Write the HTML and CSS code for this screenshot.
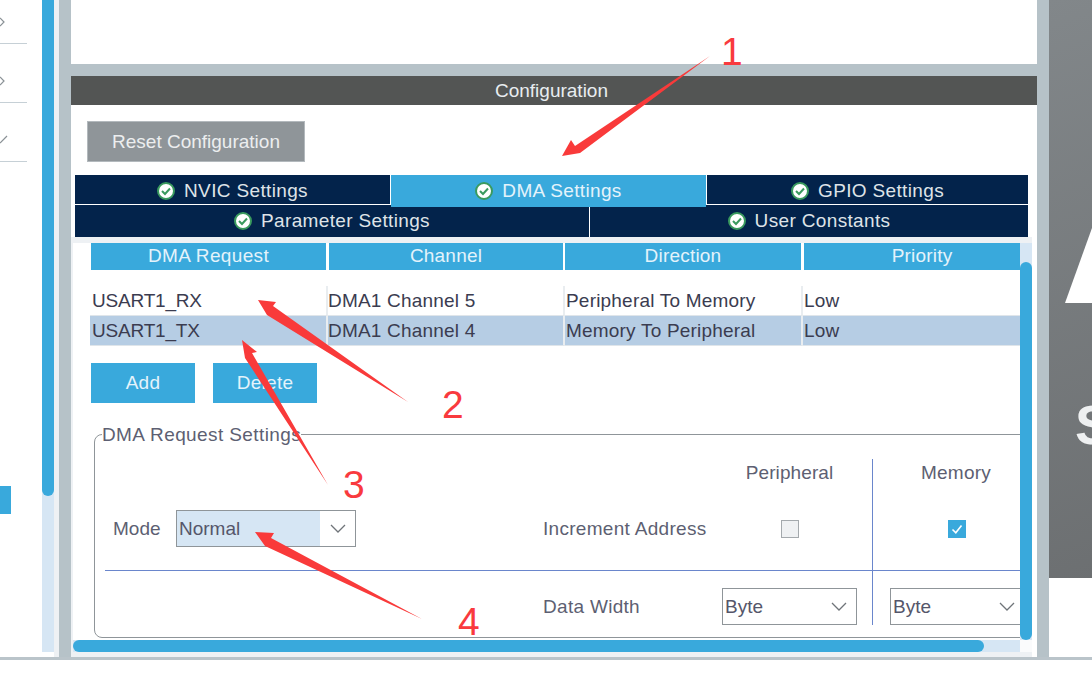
FILE: index.html
```html
<!DOCTYPE html>
<html lang="en">
<head>
    <meta charset="UTF-8">
    <title>Configuration</title>
    <link rel="stylesheet" href="styles.css">
</head>
<body>
    <div class="app">
        <div class="sidebar">
            <div class="side-row first"><svg width="5" height="10" viewBox="0 0 5 10"><path d="M0 1 L4 5 L0 9" fill="none" stroke="#8a9196" stroke-width="1.2"/></svg></div>
            <div class="side-row"><svg width="5" height="10" viewBox="0 0 5 10"><path d="M0 1 L4 5 L0 9" fill="none" stroke="#8a9196" stroke-width="1.2"/></svg></div>
            <div class="side-row"><svg width="8" height="10" viewBox="0 0 8 10"><path d="M0 8 L7 1" fill="none" stroke="#8a9196" stroke-width="1.2"/></svg></div>
            <div class="side-selected"></div>
        </div>
        <div class="side-scroll"><div class="side-thumb"></div></div>
        <div class="side-gap"></div>
        <div class="divider"></div>

        <div class="main">
            <div class="top-panel"></div>
            <div class="config-title">Configuration</div>
            <div class="config-body">
                <button class="btn-reset">Reset Configuration</button>
                <div class="tabs">
                    <div class="tab-row">
                        <div class="tab tab-nvic"><svg class="ok"><use href="#ok-icon"/></svg>NVIC Settings</div>
                        <div class="tab tab-dma active"><svg class="ok"><use href="#ok-icon"/></svg>DMA Settings</div>
                        <div class="tab tab-gpio"><svg class="ok"><use href="#ok-icon"/></svg>GPIO Settings</div>
                    </div>
                    <div class="tab-row second">
                        <div class="tab tab-param"><svg class="ok"><use href="#ok-icon"/></svg>Parameter Settings</div>
                        <div class="tab tab-user"><svg class="ok"><use href="#ok-icon"/></svg>User Constants</div>
                    </div>
                </div>

                <div class="pane">
                    <div class="pane-content">
                        <table class="dma-table">
                            <colgroup>
                                <col class="c1"><col class="c2"><col class="c3"><col class="c4">
                            </colgroup>
                            <thead>
                                <tr>
                                    <th>DMA Request</th>
                                    <th class="th-channel">Channel</th>
                                    <th>Direction</th>
                                    <th>Priority</th>
                                </tr>
                            </thead>
                            <tbody>
                                <tr class="spacer"><td colspan="4"></td></tr>
                                <tr>
                                    <td>USART1_RX</td>
                                    <td>DMA1 Channel 5</td>
                                    <td>Peripheral To Memory</td>
                                    <td>Low</td>
                                </tr>
                                <tr class="selected">
                                    <td>USART1_TX</td>
                                    <td>DMA1 Channel 4</td>
                                    <td>Memory To Peripheral</td>
                                    <td>Low</td>
                                </tr>
                            </tbody>
                        </table>

                        <div class="actions">
                            <button class="btn">Add</button>
                            <button class="btn">Delete</button>
                        </div>

                        <fieldset class="settings">
                            <legend>DMA Request Settings</legend>
                            <div class="settings-grid">
                                <div></div>
                                <div></div>
                                <div class="col-head">Peripheral</div>
                                <div class="col-head col-mem">Memory</div>

                                <div class="mode-cell">
                                    <span class="mode-label">Mode</span>
                                    <div class="select select-mode">
                                        <span class="select-value">Normal</span>
                                        <span class="select-arrow"><svg width="16" height="9" viewBox="0 0 16 9"><path d="M1 1 L8 8 L15 1" fill="none" stroke="#6f7479" stroke-width="1.3"/></svg></span>
                                    </div>
                                </div>
                                <div class="label-cell">Increment Address</div>
                                <div class="check-cell"><span class="check"></span></div>
                                <div class="check-cell col-mem">
                                    <span class="check on"><svg width="18" height="18" viewBox="0 0 18 18"><path d="M4.5 9.5 L7.8 12.8 L13.5 5.5" fill="none" stroke="#fff" stroke-width="1.6"/></svg></span>
                                </div>

                                <div class="row-end"></div>
                                <div class="row-end label-cell">Data Width</div>
                                <div class="row-end select-cell">
                                    <div class="select">
                                        <span class="select-value">Byte</span>
                                        <span class="select-arrow"><svg width="16" height="9" viewBox="0 0 16 9"><path d="M1 1 L8 8 L15 1" fill="none" stroke="#6f7479" stroke-width="1.3"/></svg></span>
                                    </div>
                                </div>
                                <div class="row-end select-cell col-mem">
                                    <div class="select">
                                        <span class="select-value">Byte</span>
                                        <span class="select-arrow"><svg width="16" height="9" viewBox="0 0 16 9"><path d="M1 1 L8 8 L15 1" fill="none" stroke="#6f7479" stroke-width="1.3"/></svg></span>
                                    </div>
                                </div>
                            </div>
                        </fieldset>
                    </div>
                    <div class="v-scroll"><div class="v-thumb"></div></div>
                    <div class="h-scroll"><div class="h-thumb"></div></div>
                    <div class="scroll-corner"></div>
                </div>
            </div>
        </div>

        <div class="divider"></div>
        <div class="logo-side">
            <div class="logo-panel">
                <svg class="logo-shape" width="27" height="75" viewBox="0 0 27 75"><polygon points="27,0 27,75 0,75" fill="#fff"/></svg>
                <span class="logo-letter">S</span>
            </div>
        </div>
    </div>

    <!-- red notes drawn on top of the screenshot -->
    <svg class="notes" width="1092" height="673" viewBox="0 0 1092 673">
        <defs>
            <symbol id="ok-icon" viewBox="0 0 18 18">
                <circle cx="9" cy="9" r="8" fill="#fff" stroke="#3a9a5e" stroke-width="2"/>
                <path d="M5 9 L8 12 L13 6.5" fill="none" stroke="#3a9a5e" stroke-width="2"/>
            </symbol>
        </defs>
        <g fill="#f93a3a">
            <polygon points="710,56 580,153 562,156 571,140 575,146"/>
            <polygon points="408,402 267,315 258,300 276,302 273,306"/>
            <polygon points="328,485 245,358 242,340 257,352 252,353"/>
            <polygon points="422,619 265,546 255,532 274,533 271,538"/>
        </g>
        <g class="note-num">
            <text x="721" y="65">1</text>
            <text x="442" y="418">2</text>
            <text x="343" y="498">3</text>
            <text x="458" y="635">4</text>
        </g>
    </svg>
</body>
</html>
```

FILE: styles.css
```css
html, body {
    margin: 0;
    height: 673px;
    overflow: hidden;
    background: #fff;
}

body {
    position: relative;
    font-family: 'Liberation Sans', Arial, sans-serif;
    font-size: 19px;
}

.app {
    display: flex;
    height: 657px;
    border-bottom: 3px solid #bac4ca;
}

/* left column */
.sidebar {
    width: 42px;
    flex: none;
    display: flex;
    flex-direction: column;
}

.side-row {
    width: 27px;
    height: 58px;
    box-sizing: content-box;
    border-bottom: 1px solid #c6d0d6;
    display: flex;
    align-items: flex-end;
    overflow: hidden;
}

.side-row svg {
    margin-bottom: 16px;
}

.side-row.first {
    height: 43px;
}

.side-selected {
    width: 11px;
    height: 28px;
    margin-top: 324px;
    background: #39a9dc;
}

.side-scroll {
    width: 12px;
    height: 652px;
    flex: none;
    background: #d6e6f4;
}

.side-thumb {
    height: 496px;
    background: #39a9dc;
    border-radius: 0 0 6px 6px;
}

.side-gap {
    width: 5px;
    flex: none;
    background: #eef1f4;
}

.divider {
    width: 12px;
    flex: none;
    background: #b6c2c8;
}

/* middle column */
.main {
    width: 966px;
    flex: none;
    display: flex;
    flex-direction: column;
}

.top-panel {
    height: 64px;
    background: #fff;
    border-bottom: 12px solid #b6c2c8;
}

.config-title {
    height: 29px;
    line-height: 29px;
    padding-right: 5px;
    text-align: center;
    background: #535554;
    color: #e8edf0;
}

.config-body {
    flex: 1;
    display: flex;
    flex-direction: column;
    background: #fff;
}

.btn-reset {
    width: 218px;
    height: 41px;
    margin: 16px 0 0 16px;
    padding: 0;
    border: 1px solid #b3b9bd;
    background: #8f9599;
    color: #eceeef;
    font: inherit;
}

/* tabs */
.tabs {
    margin: 13px 0 0 4px;
    width: 953px;
}

.tab-row {
    display: flex;
    height: 30px;
}

.tab-row.second {
    height: 32px;
}

.tab {
    box-sizing: border-box;
    background: #03234b;
    color: #dfe3e8;
    display: flex;
    align-items: center;
    justify-content: center;
    gap: 9px;
    letter-spacing: 0.35px;
    height: 29px;
    padding-top: 3px;
}

.tab-row.second .tab {
    height: 32px;
    padding-top: 0;
}

.tab-nvic { width: 315px; margin-right: 1px; }
.tab-dma { width: 315px; margin-right: 1px; }
.tab-gpio { width: 321px; }
.tab-param { width: 514px; margin-right: 1px; }
.tab-user { width: 438px; }

.tab.active {
    background: #39a9dc;
    color: #e4f3fb;
    height: 32px;
    padding-top: 0;
    position: relative;
}

.ok {
    width: 18px;
    height: 18px;
    flex: none;
}

/* scrolling pane */
.pane {
    flex: 1;
    display: grid;
    grid-template-columns: 947px 12px;
    grid-template-rows: 397px 12px;
    padding: 6px 0 5px 2px;
    background: #eef1f4;
    border-right: 5px solid #fff;
}

.pane-content {
    background: #fff;
    overflow: hidden;
    padding-left: 17px;
}

.v-scroll {
    background: #d6e6f4;
    padding-top: 19px;
}

.v-thumb {
    height: 378px;
    background: #39a9dc;
    border-radius: 6px;
}

.h-scroll {
    background: #d6e6f4;
}

.h-thumb {
    width: 911px;
    height: 12px;
    background: #39a9dc;
    border-radius: 6px;
}

.scroll-corner {
    background: #fafbfc;
}

/* table */
.dma-table {
    width: 930px;
    table-layout: fixed;
    border-collapse: separate;
    border-spacing: 0;
    color: #3b3c50;
}

.c1 { width: 238px; }
.c2 { width: 237px; }
.c3 { width: 238px; }
.c4 { width: 217px; }

.dma-table th {
    box-sizing: border-box;
    height: 27px;
    padding: 0 0 2px;
    font-weight: normal;
    background: #39a9dc;
    color: #e4f3fb;
    border-right: 2px solid #fff;
    letter-spacing: 0.2px;
}

.dma-table th:first-child {
    border-left: 1px solid #fff;
    letter-spacing: 0.35px;
}

.dma-table .th-channel {
    border-left: 1px solid #fff;
}

.dma-table th:last-child {
    border-left: 1px solid #fff;
    border-right: 0;
    padding-left: 20px;
}

.dma-table td {
    height: 28px;
    padding: 1px 0 0 1px;
    border-right: 2px solid #e9edf0;
    border-bottom: 1px solid #dfe5ea;
    white-space: nowrap;
    letter-spacing: 0.2px;
}

.dma-table td:first-child {
    padding-left: 2px;
    letter-spacing: -0.2px;
}

.dma-table td:nth-child(2) {
    padding-left: 0;
}

.dma-table td:last-child {
    border-right: 0;
}

.dma-table .spacer td {
    height: 16px;
    border: 0;
    padding: 0;
}

.selected td {
    background: #b6cde4;
}

/* add / delete */
.actions {
    display: flex;
    gap: 18px;
    margin: 17px 0 0 1px;
}

.btn {
    width: 104px;
    height: 40px;
    padding: 0;
    border: 0;
    background: #39a9dc;
    color: #e4f3fb;
    font: inherit;
    letter-spacing: 0.3px;
}

/* settings group */
.settings {
    width: 1000px;
    box-sizing: border-box;
    margin: 21px 0 0 4px;
    padding: 14px 0 12px 10px;
    border: 1px solid #8f9599;
    border-radius: 8px;
    color: #5d5f72;
}

.settings legend {
    margin-left: -3px;
    padding: 0;
    line-height: 21px;
    letter-spacing: 0.4px;
}

.settings-grid {
    display: grid;
    grid-template-columns: 438px 179px 150px 167px;
    grid-template-rows: 28px 83px 55px;
}

.col-head {
    text-align: center;
    padding-right: 15px;
    line-height: 28px;
    letter-spacing: 0.1px;
}

.col-mem {
    border-left: 1px solid #6a86cc;
    padding-right: 0;
    letter-spacing: 0.2px;
}

.mode-cell {
    display: flex;
    align-items: center;
    padding-left: 8px;
}

.mode-label {
    width: 63px;
    flex: none;
}

.label-cell {
    display: flex;
    align-items: center;
    letter-spacing: 0.3px;
}

.check-cell {
    display: flex;
    align-items: center;
    justify-content: center;
    padding-right: 15px;
}

.check-cell.col-mem {
    padding: 0 0 0 1px;
}

.check {
    width: 16px;
    height: 16px;
    border: 1px solid #a4a9ad;
    background: #eff1f3;
    display: block;
}

.check.on {
    width: 18px;
    height: 18px;
    border: 0;
    background: #39a9dc;
}

.check svg {
    display: block;
}

.row-end {
    border-top: 1px solid #6a86cc;
}

.row-end.label-cell {
    padding-top: 18px;
    box-sizing: border-box;
}

.select-cell {
    padding-top: 17px;
    box-sizing: border-box;
}

.select-cell.col-mem {
    padding-left: 17px;
}

.select {
    width: 135px;
    height: 37px;
    box-sizing: border-box;
    border: 1px solid #8f9599;
    background: #fff;
    display: flex;
    align-items: center;
    color: #55566a;
    letter-spacing: 0;
}

.select-value {
    flex: 1;
    padding-left: 2px;
    align-self: stretch;
    display: flex;
    align-items: center;
}

.select-arrow {
    width: 35px;
    flex: none;
    display: flex;
    align-items: center;
    justify-content: center;
}

.select-mode {
    width: 180px;
    flex: none;
}

.select-mode .select-value {
    background: #d6e6f4;
}

/* right column */
.logo-side {
    flex: 1;
}

.logo-panel {
    height: 578px;
    box-sizing: border-box;
    padding-top: 228px;
    overflow: hidden;
    background: linear-gradient(160deg, #82878a, #6c6f71);
    display: flex;
    flex-direction: column;
}

.logo-shape {
    display: block;
    margin-left: 16px;
    flex: none;
}

.logo-letter {
    margin: 92px 0 0 26px;
    color: #eef0f1;
    font-size: 56px;
    font-weight: bold;
    line-height: 60px;
}

/* annotations */
.notes {
    position: absolute;
    left: 0;
    top: 0;
    pointer-events: none;
}

.note-num {
    fill: #f93a3e;
    font-family: 'Liberation Sans', Arial, sans-serif;
    font-size: 39px;
}
```
